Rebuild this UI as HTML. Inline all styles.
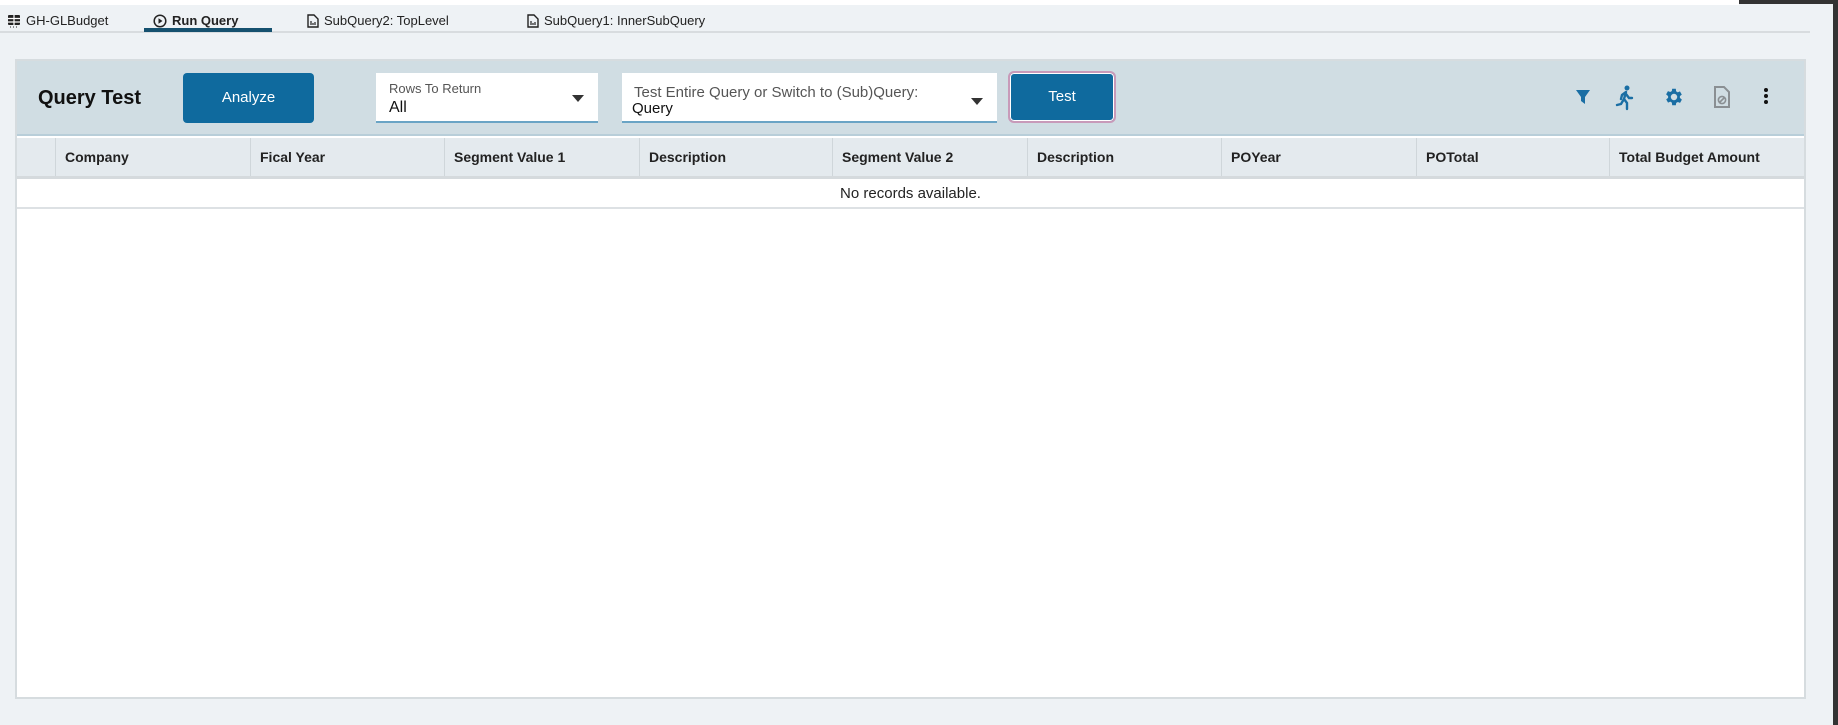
<!DOCTYPE html>
<html><head><meta charset="utf-8"><style>
*{box-sizing:border-box;margin:0;padding:0}
body{width:1838px;height:725px;background:#eef2f5;font-family:"Liberation Sans Narrow","Liberation Sans",sans-serif;position:relative;overflow:hidden;color:#222}
.abs{position:absolute}
.tabbar{left:0;top:5px;width:1810px;height:28px;border-bottom:2px solid #d8dcdf}
.tab{position:absolute;top:8px;font-size:13px;color:#222;display:flex;align-items:center;gap:5px;white-space:nowrap}
.panel{left:15px;top:59px;width:1791px;height:640px;background:#fff;border:2px solid #d6dcdf}
.toolbar{left:0;top:0;width:100%;height:75px;background:#d0dde3;border-bottom:2px solid #b8ced9}
.hdr{left:0;top:77px;width:100%;height:41px;background:#e4eaee;border-bottom:3px solid #d5dadd}
.col{position:absolute;top:0;height:38px;border-left:1px solid #cfd6da;font-size:14px;font-weight:bold;padding-left:9px;line-height:38px;color:#222;white-space:nowrap}
.btn{background:#0f6a9e;color:#fff;border-radius:4px;font-size:15px;text-align:center}
.dd{background:#fff;border-bottom:2px solid #6aa4c5}
</style></head><body>
<div class="abs" style="left:1739px;top:0;width:99px;height:4px;background:#333"></div>
<div class="abs" style="left:1833px;top:0;width:5px;height:725px;background:#333"></div>
<div class="abs" style="left:0;top:0;width:1739px;height:5px;background:#fff"></div>
<div class="abs tabbar">
 <div class="tab" style="left:7px"><svg width="14" height="14" viewBox="0 0 14 14"><rect x="1" y="1" width="12" height="10" rx="1" fill="#222"/><path d="M1 4.5h12M1 8h12M7 1v10" stroke="#fff" stroke-width="1.2"/><path d="M3 13h1M6 13h1M9 13h1" stroke="#222"/></svg>GH-GLBudget</div>
 <div class="tab" style="left:153px;font-weight:bold"><svg width="14" height="14" viewBox="0 0 14 14"><circle cx="7" cy="7" r="5.8" fill="none" stroke="#222" stroke-width="1.5"/><path d="M5.5 4.2L9.5 7 5.5 9.8z" fill="#222"/></svg>Run Query</div>
 <div class="abs" style="left:144px;top:23px;width:128px;height:4px;background:#15516f"></div>
 <div class="tab" style="left:307px"><svg width="12" height="14" viewBox="0 0 12 14"><path d="M1 1h6l4 4v8H1z" fill="none" stroke="#222" stroke-width="1.4"/><path d="M4 7v4M6 9v2M8 8v3" stroke="#222" stroke-width="1.2"/></svg>SubQuery2: TopLevel</div>
 <div class="tab" style="left:527px"><svg width="12" height="14" viewBox="0 0 12 14"><path d="M1 1h6l4 4v8H1z" fill="none" stroke="#222" stroke-width="1.4"/><path d="M4 7v4M6 9v2M8 8v3" stroke="#222" stroke-width="1.2"/></svg>SubQuery1: InnerSubQuery</div>
</div>
<div class="abs panel">
 <div class="abs toolbar">
  <div class="abs" style="left:21px;top:26px;font-size:20px;font-weight:bold;color:#111">Query Test</div>
  <div class="abs btn" style="left:166px;top:12px;width:131px;height:50px;line-height:50px">Analyze</div>
  <div class="abs dd" style="left:359px;top:12px;width:222px;height:50px">
   <div class="abs" style="left:13px;top:8px;font-size:13px;color:#555">Rows To Return</div>
   <div class="abs" style="left:13px;top:26px;font-size:16px;color:#111">All</div>
   <div class="abs" style="right:14px;top:22px;border-left:6px solid transparent;border-right:6px solid transparent;border-top:7px solid #333"></div>
  </div>
  <div class="abs dd" style="left:605px;top:12px;width:375px;height:50px">
   <div class="abs" style="left:12px;top:11px;font-size:15px;color:#555;white-space:nowrap">Test Entire Query or Switch to (Sub)Query:</div>
   <div class="abs" style="left:10px;top:27px;font-size:15px;color:#111">Query</div>
   <div class="abs" style="right:14px;top:25px;border-left:6px solid transparent;border-right:6px solid transparent;border-top:7px solid #333"></div>
  </div>
  <div class="abs btn" style="left:991px;top:10px;width:108px;height:52px;line-height:48px;border:2px solid #c89ab9;border-radius:6px;box-shadow:inset 0 0 0 1px #fff">Test</div>
  <svg class="abs" style="left:1559px;top:29px" width="14" height="14" viewBox="0 0 14 14"><path d="M0 0h14L9 7v7L5 11V7z" fill="#1a6ea4"/></svg>
  <svg class="abs" style="left:1598px;top:24px" width="20" height="26" viewBox="0 0 20 26"><circle cx="12" cy="3" r="2.5" fill="#1a6ea4"/><path d="M11 7L7 10l-1 4M11 7l-2 7 3 4v6M9 14l-3 5-4 1M11 9l3 4h3" stroke="#1a6ea4" stroke-width="2.4" fill="none" stroke-linecap="round"/></svg>
  <svg class="abs" style="left:1646px;top:25px" width="22" height="22" viewBox="0 0 24 24"><path fill="#1a6ea4" d="M19.4 13a7.5 7.5 0 000-2l2.1-1.6-2-3.5-2.5 1a7 7 0 00-1.7-1L15 3h-4l-.4 2.6a7 7 0 00-1.7 1l-2.5-1-2 3.5L6.6 11a7.5 7.5 0 000 2l-2.1 1.6 2 3.5 2.5-1a7 7 0 001.7 1L11 21h4l.4-2.6a7 7 0 001.7-1l2.5 1 2-3.5zM13 15.5a3.5 3.5 0 110-7 3.5 3.5 0 010 7z" transform="translate(-1 0)"/></svg>
  <svg class="abs" style="left:1696px;top:24px" width="18" height="24" viewBox="0 0 18 24"><path d="M2 2h9l5 5v15H2z" fill="none" stroke="#8a8f93" stroke-width="2"/><circle cx="9" cy="15" r="3.6" fill="none" stroke="#8a8f93" stroke-width="1.6"/><path d="M6.5 17.5l5-5" stroke="#8a8f93" stroke-width="1.6"/></svg>
  <svg class="abs" style="left:1746px;top:26px" width="6" height="18" viewBox="0 0 6 18"><circle cx="3" cy="3" r="2" fill="#111"/><circle cx="3" cy="9" r="2" fill="#111"/><circle cx="3" cy="15" r="2" fill="#111"/></svg>
 </div>
 <div class="abs hdr">
  <div class="col" style="left:38px;width:195px">Company</div>
  <div class="col" style="left:233px;width:194px">Fical Year</div>
  <div class="col" style="left:427px;width:195px">Segment Value 1</div>
  <div class="col" style="left:622px;width:193px">Description</div>
  <div class="col" style="left:815px;width:195px">Segment Value 2</div>
  <div class="col" style="left:1010px;width:194px">Description</div>
  <div class="col" style="left:1204px;width:195px">POYear</div>
  <div class="col" style="left:1399px;width:193px">POTotal</div>
  <div class="col" style="left:1592px;width:197px">Total Budget Amount</div>
 </div>
 <div class="abs" style="left:0;top:118px;width:100%;height:30px;border-bottom:2px solid #dde1e4;text-align:center;font-size:15px;line-height:30px;color:#222">No records available.</div>
</div>
</body></html>
